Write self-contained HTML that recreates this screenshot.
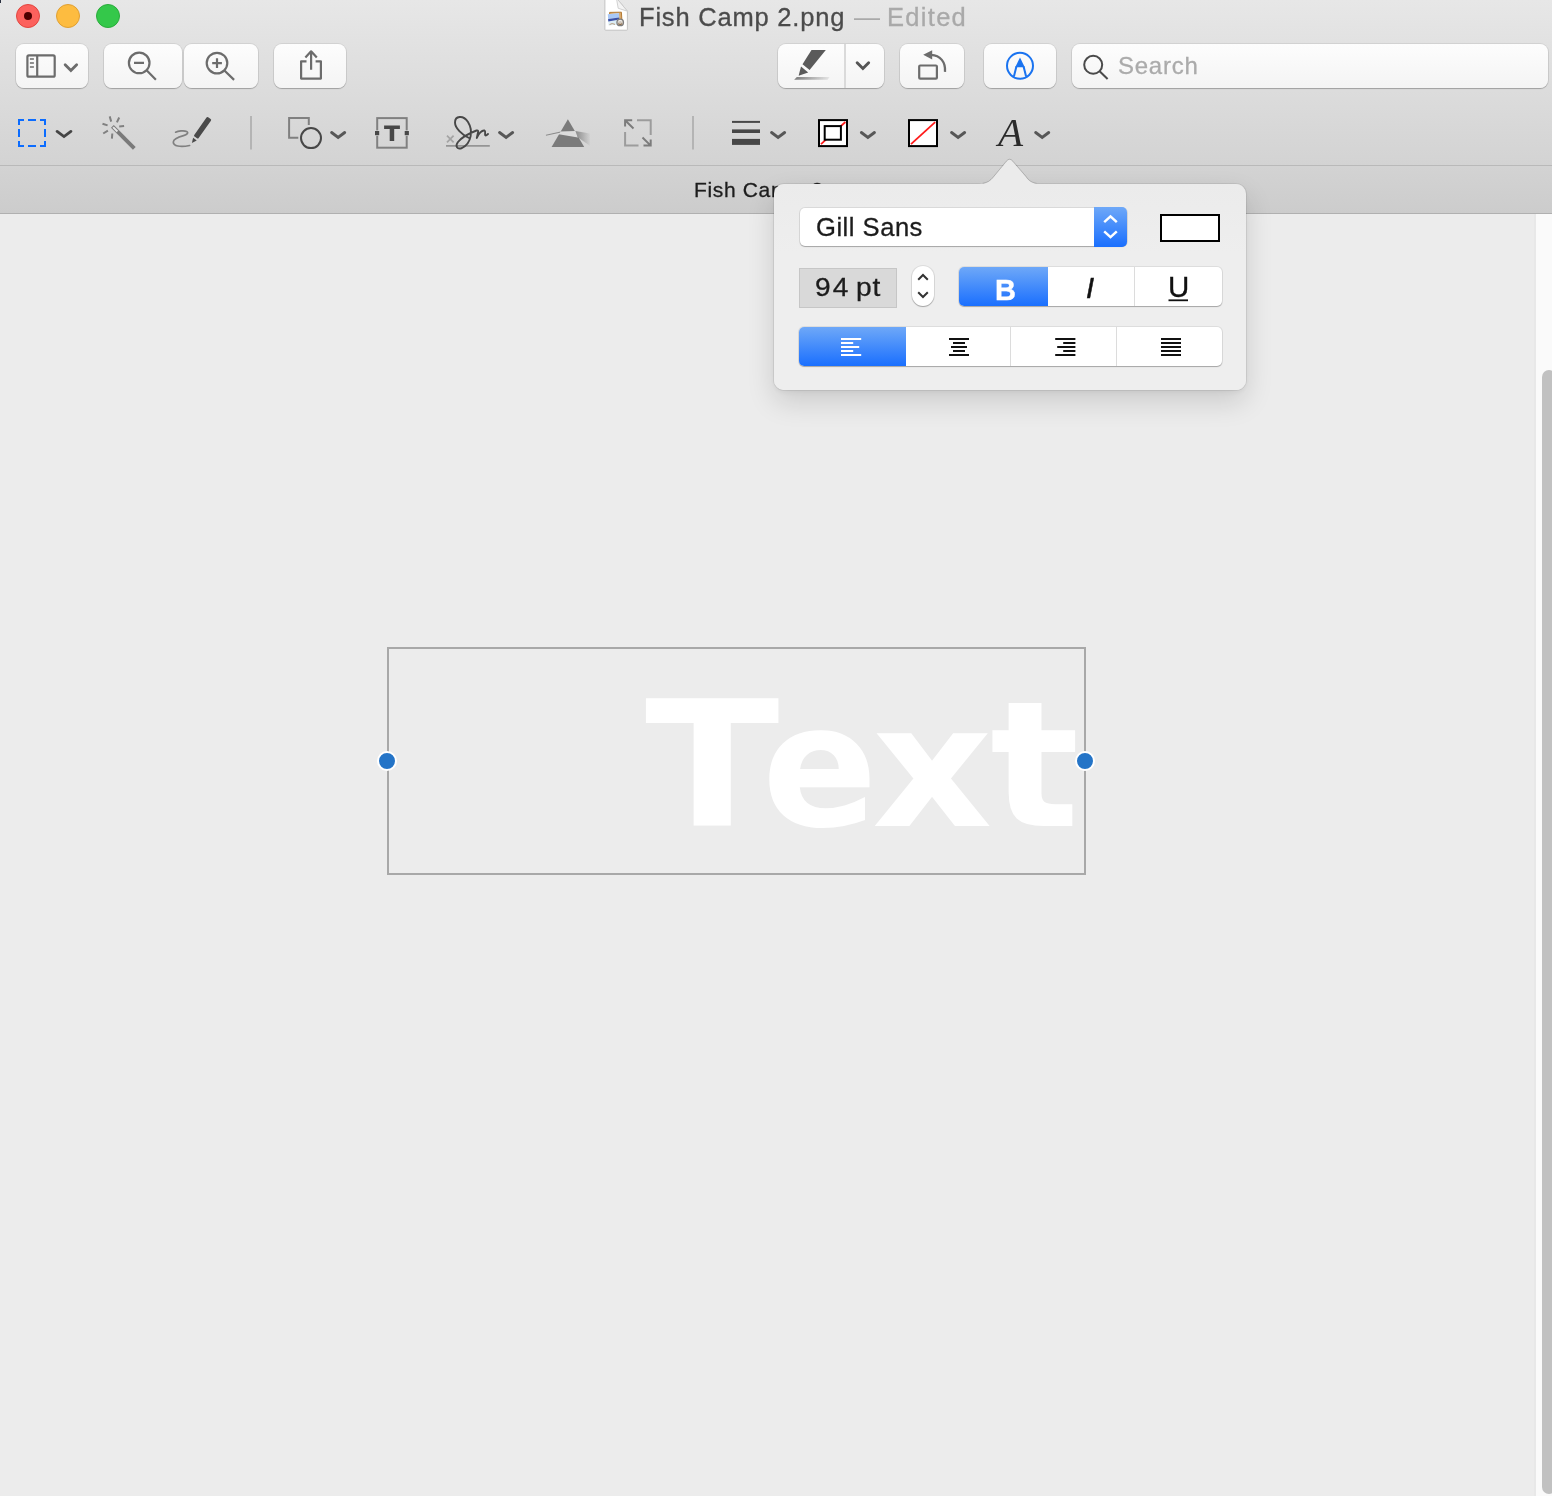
<!DOCTYPE html>
<html lang="en">
<head>
<meta charset="utf-8">
<title>Fish Camp 2.png — Edited</title>
<style>
html,body{margin:0;padding:0;}
body{width:1552px;height:1496px;overflow:hidden;position:relative;background:#ececec;
  font-family:"Liberation Sans",sans-serif;-webkit-font-smoothing:antialiased;}
.abs{position:absolute;}
#title,#tdash,#tedited,#subtitle,#search,#fontname,#sizetext,#Bt,#It,#Ut,#Aicon,#bigtext{will-change:transform;}
#title,#tedited,#search,#fontname,#sizetext,#Ut{-webkit-text-stroke:0.3px currentColor;}
#titlebar{left:0;top:0;width:1552px;height:165px;background:linear-gradient(#e7e7e7,#d3d3d3);}
#tbline{left:0;top:165px;width:1552px;height:1px;background:#b9b9b9;}
#strip{left:0;top:166px;width:1552px;height:47px;background:linear-gradient(#d3d3d3,#cccccc);}
#stripline{left:0;top:212.5px;width:1552px;height:1px;background:#b0b0b0;}
#canvas{left:0;top:213.5px;width:1552px;height:1283px;background:#ececec;}
.tl{width:24px;height:24px;border-radius:50%;top:4px;box-sizing:border-box;}
.btn{top:44px;height:44px;box-sizing:border-box;border-radius:8px;
  background:linear-gradient(#fdfdfd,#f4f4f4);
  box-shadow:0 0 0 1px rgba(0,0,0,0.07),0 1px 1px rgba(0,0,0,0.22);}
#title{top:1.6px;left:639.4px;font-size:25.5px;line-height:30px;color:#4b4b4b;white-space:nowrap;letter-spacing:0.8px;}
#tdash{top:2px;left:854px;font-size:26px;line-height:30px;color:#a9a9a9;}
#tedited{top:1.6px;left:886.6px;font-size:25.5px;line-height:30px;color:#a9a9a9;letter-spacing:1.3px;}
#subtitle{top:176.1px;left:694px;-webkit-text-stroke:0.3px currentColor;font-size:21px;line-height:28px;color:#1d1d1d;white-space:nowrap;letter-spacing:0.65px;}
#search{top:52.2px;left:1118px;font-size:24px;line-height:28px;color:#ababab;letter-spacing:0.75px;}
#scrolltrack{left:1534px;top:213.5px;width:18px;height:1283px;background:#fafafa;border-left:2px solid #e8e8e8;box-sizing:border-box;}
#thumb{left:1542px;top:370px;width:14px;height:1124px;border-radius:7px;background:#c1c1c1;}
#box{left:387px;top:647px;width:699px;height:228px;box-sizing:border-box;border:2px solid #a8a8a8;}
#bigtext{left:0;top:646.3px;font-family:"DejaVu Sans","Liberation Sans",sans-serif;font-weight:bold;font-size:175px;line-height:240px;color:#fff;white-space:nowrap;}
#bigtext span{position:absolute;top:0;transform-origin:0 180px;}
.handle{width:16px;height:16px;border-radius:50%;background:#2474c7;border:2px solid #fff;}
#pop{left:774px;top:184px;width:472px;height:206px;border-radius:10px;background:linear-gradient(#ebebeb,#eeeeee 70px);
  box-shadow:0 0 0 1px rgba(0,0,0,0.07),0 2px 6px rgba(0,0,0,0.06),0 12px 28px rgba(0,0,0,0.14);}
#fontsel{left:800px;top:208px;width:327px;height:38px;border-radius:5px;background:#fff;box-sizing:border-box;
  box-shadow:0 0 0 1px rgba(0,0,0,0.08),0 1px 1px rgba(0,0,0,0.25);}
#fontcap{left:1094px;top:207px;width:33px;height:40px;border-radius:0 5px 5px 0;background:linear-gradient(#6ea8f8,#1a6ffe);}
#fontname{left:815.9px;top:212.1px;font-size:25.6px;line-height:30px;color:#1c1c1c;letter-spacing:0.5px;}
#well{left:1160px;top:214px;width:60px;height:28px;box-sizing:border-box;border:2px solid #000;background:#fff;}
#sizefield{left:799px;top:268px;width:98px;height:40px;box-sizing:border-box;border:1px solid #c6c6c6;background:#d9d9d9;}
#sizetext{left:815.3px;top:272px;font-size:26px;line-height:30px;color:#1c1c1c;white-space:nowrap;transform-origin:0 0;transform:scaleX(1.08);}
#stepper{left:912px;top:266px;width:22px;height:40px;border-radius:11px;background:#fff;
  box-shadow:0 0 0 1px rgba(0,0,0,0.08),0 1px 1px rgba(0,0,0,0.25);}
.seg{border-radius:5px;background:#fff;box-shadow:0 0 0 1px rgba(0,0,0,0.07),0 1px 1px rgba(0,0,0,0.25);overflow:hidden;}
.segsel{background:linear-gradient(#6ea8f8,#1a6ffe);}
.segdiv{width:1px;background:#dcdcdc;}
#Bt{left:995.3px;top:273.8px;font-size:29px;line-height:32px;font-weight:bold;color:#fff;-webkit-text-stroke:0.4px #fff;}
#It{left:1086px;top:272.4px;font-size:29px;line-height:32px;font-style:italic;color:#111;-webkit-text-stroke:0.5px #111;}
#Ut{left:1167.6px;top:271.4px;font-size:29.5px;line-height:32px;color:#111;}
#Aicon{left:998px;top:109px;font-family:"Liberation Serif",serif;font-style:italic;font-size:41px;line-height:46px;color:#2b2b2b;}
svg{position:absolute;left:0;top:0;overflow:visible;}
</style>
</head>
<body>
<div id="titlebar" class="abs"></div>
<div id="tbline" class="abs"></div>
<div id="strip" class="abs"></div>
<div id="stripline" class="abs"></div>
<div id="canvas" class="abs"></div>

<div class="abs" style="left:0;top:0;width:1px;height:3px;background:#2a3140;"></div>
<!-- traffic lights -->
<div class="abs tl" style="left:16px;background:#fc615d;border:1px solid #e2463f;"></div>
<div class="abs" style="left:24px;top:12px;width:8px;height:8px;border-radius:50%;background:#4d0000;"></div>
<div class="abs tl" style="left:56px;background:#fdbc40;border:1px solid #e0a033;"></div>
<div class="abs tl" style="left:96px;background:#34c84a;border:1px solid #2aab3b;"></div>

<!-- title -->
<div id="title" class="abs">Fish Camp 2.png</div>
<div id="tdash" class="abs">—</div>
<div id="tedited" class="abs">Edited</div>
<div id="subtitle" class="abs">Fish Camp <span style="margin-left:3.5px">2.png</span></div>

<!-- toolbar buttons -->
<div class="abs btn" style="left:16px;width:72px;"></div>
<div class="abs btn" style="left:104px;width:78px;"></div>
<div class="abs btn" style="left:184px;width:74px;"></div>
<div class="abs btn" style="left:274px;width:72px;"></div>
<div class="abs btn" style="left:778px;width:106px;"></div>
<div class="abs" style="left:844.2px;top:44px;width:1.5px;height:44px;background:#dadada;"></div>
<div class="abs btn" style="left:900px;width:64px;"></div>
<div class="abs btn" style="left:984px;width:72px;"></div>
<div class="abs btn" style="left:1072px;width:476px;"></div>
<div id="search" class="abs">Search</div>
<div id="Aicon" class="abs">A</div>

<!-- scrollbar -->
<div id="scrolltrack" class="abs"></div>
<div id="thumb" class="abs"></div>

<!-- text box on canvas -->
<div id="bigtext" class="abs"><span style="left:644.9px;transform:scaleX(1.126)">T</span><span style="left:762.1px;transform:scale(0.975,0.97)">e</span><span style="left:872px;transform:scale(1.066,0.97)">x</span><span style="left:989.6px;transform:scaleX(1.068)">t</span></div>
<div id="box" class="abs"></div>
<div class="abs handle" style="left:377px;top:751px;"></div>
<div class="abs handle" style="left:1075px;top:751px;"></div>

<!-- ICONS -->
<svg id="icons" width="1552" height="220" viewBox="0 0 1552 220" fill="none">
  <defs>
    <linearGradient id="fadeR" x1="0" y1="0" x2="1" y2="0"><stop offset="0" stop-color="#7a7a7a"/><stop offset="1" stop-color="#7a7a7a" stop-opacity="0.12"/></linearGradient>
    <linearGradient id="fan" x1="0" y1="0" x2="1" y2="0"><stop offset="0" stop-color="#8a8a8a"/><stop offset="1" stop-color="#8a8a8a" stop-opacity="0.05"/></linearGradient>
  </defs>
  <!-- document proxy icon -->
  <path d="M604.9 -2H616.4L627.4 11.2V29.6Q627.4 30.2 626.8 30.2H605.5Q604.9 30.2 604.9 29.6Z" fill="#fff" stroke="#bdbdbd" stroke-width="0.9"/>
  <path d="M616.4 -2L618.2 8.3L627.4 11.2Z" fill="#f4f4f4" stroke="#c6c6c6" stroke-width="0.8"/>
  <path d="M609.6 12.4L621.4 12.2L621.9 20.5L610 21Z" fill="#d9a86a" stroke="#b47a34" stroke-width="1"/>
  <path d="M607.8 14.2L619 13.2L619.6 24.6L608.6 25.6Z" fill="#dcedf5"/>
  <path d="M607.8 14.2L619 13.2L619.2 17.6L608.1 18.8Z" fill="#a9c8f6"/>
  <path d="M608.1 18.9L619.2 17.6L619.3 19.4L608.3 21.6Z" fill="#3c50a6"/>
  <path d="M609.5 24.6Q612 22.6 615 24.4" stroke="#b79a7c" stroke-width="1" fill="none"/>
  <circle cx="620.2" cy="22.4" r="3.3" fill="#cfc6bb" stroke="#7d7d7d" stroke-width="1.2"/>
  <path d="M618.4 21.2Q620.2 19.6 622 21.2" stroke="#f6f6f6" stroke-width="1" fill="none"/>
  <path d="M618.2 23.6Q620.2 25.4 622.2 23.6" stroke="#8a6a4a" stroke-width="1.1" fill="none"/>
  <!-- sidebar icon -->
  <g stroke="#6c6c6c" stroke-width="2.2">
    <rect x="27.4" y="55.4" width="27.3" height="21.3" rx="1.5"/>
    <path d="M37.2 55.4V76.7"/>
    <path d="M29.9 58.9H33.9M29.9 62.9H33.9M29.9 66.9H33.9" stroke-width="1.5"/>
  </g>
  <!-- zoom out -->
  <g stroke="#6c6c6c" stroke-width="2.2">
    <circle cx="139.2" cy="62.9" r="10.3"/>
    <path d="M146.6 70.3L155.9 79.7M134 62.9H144"/>
  </g>
  <!-- zoom in -->
  <g stroke="#6c6c6c" stroke-width="2.2">
    <circle cx="217" cy="63.1" r="10.3"/>
    <path d="M224.4 70.5L234.1 79.9M212.2 63.1H221.9M217 58.3V68"/>
  </g>
  <!-- share -->
  <g stroke="#6c6c6c" stroke-width="2.2" stroke-linejoin="round">
    <path d="M306.5 61.3H301.1V78.6H320.9V61.3H315.6"/>
    <path d="M311.1 69.8V51.5M305.4 57.6L311.1 51.3L316.8 57.6"/>
  </g>
  <!-- highlighter -->
  <g fill="#5a5a5a">
    <path d="M811.5 50H825.8L809.6 70L802.5 64.2Z"/>
    <path d="M801 66.6L808.2 72.5L798.6 75.8Z"/>
  </g>
  <path d="M796.8 77H829.6L827.6 79.7H794.2Z" fill="url(#fadeR)"/>
  <!-- rotate -->
  <g stroke="#6c6c6c" stroke-width="2.2">
    <rect x="919.2" y="65.5" width="17.7" height="13.2" rx="1"/>
    <path d="M931 54.8C940.4 55.4 945.8 62 945 71.9" stroke-width="2.3"/>
  </g>
  <path d="M923.2 54.8L932.2 50.2V59.4Z" fill="#6c6c6c"/>
  <!-- markup -->
  <g stroke="#1a73f0" stroke-width="2">
    <circle cx="1020" cy="65.8" r="13"/>
    <path d="M1016.4 66.4L1013.9 76.6M1023.6 66.4L1026.1 76.6"/>
  </g>
  <path d="M1020 57.4L1024.8 67.2H1015.2Z" fill="#1a73f0"/>
  <!-- search glass -->
  <g stroke="#4a4a4a" stroke-width="2">
    <circle cx="1093.2" cy="64.8" r="9"/>
    <path d="M1099.6 71.2L1107.6 79"/>
  </g>

  <!-- selection tool -->
  <g stroke="#0b6cff" stroke-width="2">
    <path d="M24 120H19V125M40 120H45V125M19 141V146H24M45 141V146H40"/>
    <path d="M28 120H36M28 146H36M19 129V137M45 129V137"/>
  </g>
  <!-- magic wand -->
  <path d="M112.4 126.45L134.3 148.45" stroke="#7a7a7a" stroke-width="3.9"/>
  <path d="M113.1 127.15L117.4 131.5" stroke="#e6e6e6" stroke-width="2"/>
  <g stroke="#808080" stroke-width="2">
    <path d="M109.7 116.4L111.2 121.6M119.2 117.5L116.9 122.4M119.2 126.4L124.1 125.9M102.5 123.7L107.6 125.4M103.2 133.5L107.9 130.6M112.3 133.5L111.9 138.6"/>
  </g>
  <!-- sketch -->
  <rect x="-2.7" y="0" width="5.4" height="23.6" rx="1.2" transform="translate(209.4 118.2) rotate(35.3)" fill="#4a4a4a"/>
  <path d="M193.1 137.8L196.7 140.4L191.9 142.9Z" fill="#4a4a4a"/>
  <path d="M175.6 132.2C178 131 184 130.2 186.6 131.4C189 132.8 187 134.6 183.5 135.6C179 136.8 173.6 138.8 173.3 142C173.2 146 180 147.6 189.6 145.5" stroke="#808080" stroke-width="1.7" stroke-linecap="round"/>
  <!-- separator -->
  <path d="M251 116V149.6" stroke="#b4b4b4" stroke-width="2"/>
  <!-- shapes -->
  <path d="M308.8 125V118.1H289.1V137.7H298.3" stroke="#808080" stroke-width="2"/>
  <circle cx="311" cy="138.1" r="10" stroke="#474747" stroke-width="2"/>
  <!-- text tool -->
  <rect x="377.2" y="118.1" width="29.5" height="29.6" stroke="#808080" stroke-width="2"/>
  <rect x="374.6" y="130.4" width="5" height="5.4" fill="#d9d9d9"/><rect x="404.3" y="130.4" width="5" height="5.4" fill="#d9d9d9"/><rect x="375" y="131" width="4.2" height="4.2" fill="#474747"/><rect x="404.7" y="131" width="4.2" height="4.2" fill="#474747"/>
  <path d="M384.1 125.4H399.9V129H394.2V140.9H389.7V129H384.1Z" fill="#474747"/>
  <!-- signature -->
  <path d="M446 145.9H489.8" stroke="#959595" stroke-width="1.9"/>
  <path d="M447 135.6L453.6 142.4M453.6 135.6L447 142.4" stroke="#a4a4a4" stroke-width="1.7"/>
  <path d="M469 138C462 135 455 128 455 122.5C455 116 463 114.5 468 122C473 130 472 143 462 148C457 150 455 146 458 142C462 137 470 133 476.5 130.5C478 130 478.5 131 478 132.5L476.8 138C478.5 133.5 482 130 484.5 130.5C486 131.5 484.5 134 485.3 135.4C486 136 487 135 488 134" stroke="#474747" stroke-width="1.9" stroke-linecap="round" stroke-linejoin="round"/>
  <!-- prism -->
  <path d="M567.9 119.3L584.2 147H551.6Z" fill="#7b7b7b"/>
  <path d="M545.8 134.8L560 131.6L575.4 131L578 137.4L558.7 134.2L546 135.6Z" fill="#dcdcdc"/>
  <path d="M545.8 134.8L560.5 131.6L560 132.8L546 135.8Z" fill="#8c8c8c"/>
  <path d="M575.4 131L590 133.5V145.8L578 137.4Z" fill="url(#fan)"/>
  <!-- adjust size -->
  <path d="M637 120.3H650.7V135M625.1 132V145.6H638.5" stroke="#9c9c9c" stroke-width="2" transform="translate(0,0)"/>
  <g stroke="#7c7c7c" stroke-width="2">
    <path d="M625.1 126.5V120.3H632.2M625.6 120.8L633.5 128.5"/>
    <path d="M650.7 139.5V145.6H643.5M650.2 145.1L642.5 137.5"/>
  </g>
  <!-- separator 2 -->
  <path d="M693 116V149.6" stroke="#b4b4b4" stroke-width="2"/>
  <!-- line style -->
  <g fill="#474747">
    <rect x="732" y="120.9" width="28" height="2"/>
    <rect x="732" y="129.4" width="28" height="3.6"/>
    <rect x="732" y="138.9" width="28" height="6"/>
  </g>
  <!-- border color -->
  <rect x="819" y="120.1" width="28" height="26" fill="#fff" stroke="#000" stroke-width="2"/>
  <path d="M821 144.2L845.4 122" stroke="#ff1a1a" stroke-width="1.8"/>
  <rect x="824.7" y="126.1" width="16.2" height="13.6" fill="#fff" stroke="#000" stroke-width="2"/>
  <!-- fill color -->
  <rect x="909" y="120.1" width="28" height="26" fill="#fff" stroke="#000" stroke-width="2"/>
  <path d="M911 144.2L935.2 122.2" stroke="#ff1a1a" stroke-width="1.8"/>
  <!-- chevrons -->
  <path d="M65.15 64.65L70.90 70.50L76.65 64.65" stroke="#6c6c6c" stroke-width="2.8" stroke-linecap="round"/>
  <path d="M857.15 62.75L862.90 68.55L868.65 62.75" stroke="#555555" stroke-width="2.9" stroke-linecap="round"/>
  <path d="M57.10 131.45L64.00 136.55L70.90 131.45" stroke="#454545" stroke-width="2.9" stroke-linecap="round"/>
  <path d="M331.60 132.50L338.15 137.45L344.70 132.50" stroke="#575757" stroke-width="2.9" stroke-linecap="round"/>
  <path d="M499.55 132.50L506.10 137.45L512.65 132.50" stroke="#575757" stroke-width="2.9" stroke-linecap="round"/>
  <path d="M771.55 132.50L778.10 137.45L784.65 132.50" stroke="#575757" stroke-width="2.9" stroke-linecap="round"/>
  <path d="M861.35 132.50L867.90 137.45L874.45 132.50" stroke="#575757" stroke-width="2.9" stroke-linecap="round"/>
  <path d="M951.55 132.50L958.10 137.45L964.65 132.50" stroke="#575757" stroke-width="2.9" stroke-linecap="round"/>
  <path d="M1035.65 132.50L1042.20 137.45L1048.75 132.50" stroke="#575757" stroke-width="2.9" stroke-linecap="round"/>
</svg>

<!-- popover -->
<div id="pop" class="abs"></div>
<svg id="poparrow" width="1552" height="220" viewBox="0 0 1552 220">
  <path d="M979 184 C986 184 990 181.6 993.6 177.3 L1006.7 161.5 Q1009.6 158 1012.5 161.5 L1025.6 176.7 C1029.2 181.6 1033.2 184 1040 184 L1040 189 L979 189 Z" fill="#ebebeb"/>
  <path d="M982.6 183.3 C987.4 182.7 990.4 180.7 993.3 177 L1006.3 161.2 Q1009.6 157.2 1012.9 161.2 L1026 176.4 C1028.9 180.7 1031.9 182.7 1036.6 183.3" fill="none" stroke="rgba(0,0,0,0.16)" stroke-width="1"/>
</svg>
<div id="fontsel" class="abs"></div>
<div id="fontcap" class="abs"></div>
<div id="fontname" class="abs">Gill Sans</div>
<div id="well" class="abs"></div>
<div id="sizefield" class="abs"></div>
<div id="sizetext" class="abs"><span style="letter-spacing:1.9px">94</span> <span style="letter-spacing:0.9px;margin-left:-2px">pt</span></div>
<div id="stepper" class="abs"></div>
<div class="abs seg" style="left:959px;top:267.4px;width:263px;height:39px;">
  <div class="abs segsel" style="left:0;top:0;width:89px;height:39px;"></div>
  <div class="abs segdiv" style="left:175px;top:0;height:39px;"></div>
</div>
<div id="Bt" class="abs">B</div>
<div id="It" class="abs">I</div>
<div id="Ut" class="abs">U</div>
<div class="abs seg" style="left:799px;top:327.4px;width:423px;height:39px;">
  <div class="abs segsel" style="left:0;top:0;width:107px;height:39px;"></div>
  <div class="abs segdiv" style="left:211px;top:0;height:39px;"></div>
  <div class="abs segdiv" style="left:317px;top:0;height:39px;"></div>
</div>
<svg id="popicons" width="1552" height="400" viewBox="0 0 1552 400" fill="none">
  <!-- font select chevrons -->
  <path d="M1104.2 222.2L1110.5 216.4L1116.8 222.2M1104.2 231.3L1110.5 237.1L1116.8 231.3" stroke="#fff" stroke-width="2.5"/>
  <!-- stepper chevrons -->
  <path d="M918.2 279.8L923 275L927.8 279.8M918.2 292.2L923 297L927.8 292.2" stroke="#333" stroke-width="2"/>
  <!-- underline of U -->
  <path d="M1168.5 300.3H1188" stroke="#111" stroke-width="1.8"/>
  <!-- align left -->
  <g fill="#fff">
    <rect x="841" y="338" width="20.2" height="2"/><rect x="841" y="342" width="12.2" height="2"/><rect x="841" y="346" width="18.2" height="2"/><rect x="841" y="350" width="12.2" height="2"/><rect x="841" y="354" width="20.2" height="2"/>
  </g>
  <g fill="#111">
    <!-- center -->
    <rect x="949" y="338" width="20" height="2"/><rect x="953" y="342" width="12" height="2"/><rect x="951" y="346" width="16" height="2"/><rect x="953" y="350" width="12" height="2"/><rect x="949" y="354" width="20" height="2"/>
    <!-- right -->
    <rect x="1055.2" y="338" width="20.2" height="2"/><rect x="1063.2" y="342" width="12.2" height="2"/><rect x="1057.2" y="346" width="18.2" height="2"/><rect x="1063.2" y="350" width="12.2" height="2"/><rect x="1055.2" y="354" width="20.2" height="2"/>
    <!-- justify -->
    <rect x="1161" y="338" width="20" height="2"/><rect x="1161" y="342" width="20" height="2"/><rect x="1161" y="346" width="20" height="2"/><rect x="1161" y="350" width="20" height="2"/><rect x="1161" y="354" width="20" height="2"/>
  </g>
</svg>
</body>
</html>
